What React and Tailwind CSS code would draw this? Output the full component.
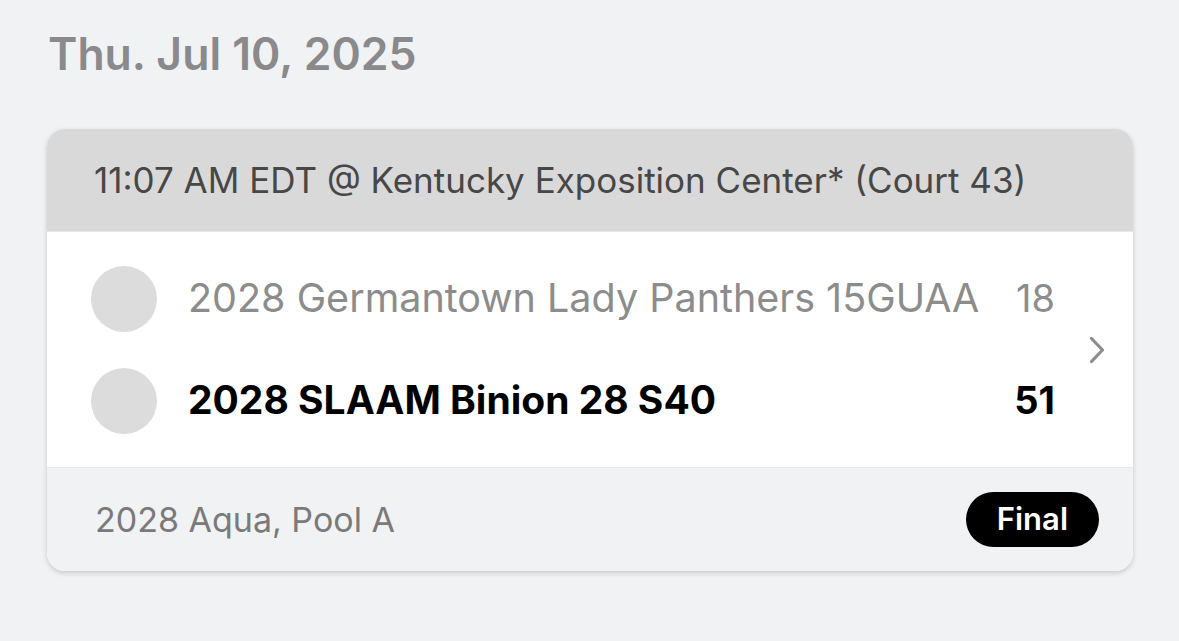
const font = { fontFamily: 'Inter, "Noto Sans", sans-serif' };

const TeamRow = ({ name, score, winner }) => (
  <div className="flex items-center h-[66px]">
    <div className="w-[66px] h-[66px] rounded-full bg-[#dcdcdc] shrink-0" />
    <div
      className={`ml-[31px] flex-1 whitespace-nowrap ${
        winner ? 'text-[39px] font-bold text-black' : 'text-[39.5px] text-[#8c8c8c]'
      }`}
    >
      {name}
    </div>
    <div
      className={`text-[38px] text-right ${winner ? 'font-bold text-black' : 'text-[#8c8c8c]'}`}
    >
      {score}
    </div>
  </div>
);

export default function App() {
  return (
    <div className="w-[1179px] h-[641px] bg-[#f1f2f4] overflow-hidden" style={font}>
      <div className="pl-[48px] pt-[26px] text-[44.5px] font-semibold text-[#8a898c] leading-[56px]">
        Thu. Jul 10, 2025
      </div>
      <div className="ml-[47px] mt-[47px] w-[1086px] rounded-[18px] overflow-hidden bg-white shadow-[0_2px_5px_rgba(0,0,0,0.18)]">
        {/* header */}
        <div className="h-[102px] bg-[#d9d9d9] flex items-center pl-[47px] text-[35px] text-[#474747]">
          11:07 AM EDT @ Kentucky Exposition Center* (Court 43)
        </div>
        {/* teams */}
        <div className="h-[236px] bg-white flex items-center pl-[44px] pr-[28px] border-t border-[#e8e8e8]">
          <div className="flex-1 flex flex-col gap-[36px]">
            <TeamRow name="2028 Germantown Lady Panthers 15GUAA" score="18" />
            <TeamRow name="2028 SLAAM Binion 28 S40" score="51" winner />
          </div>
          <svg className="ml-[34px] w-[16px] h-[28px]" viewBox="0 0 16 28" fill="none">
            <polyline points="2.5,2.5 13.5,14 2.5,25.5" stroke="#8c8c8c" strokeWidth="3.2" strokeLinecap="round" strokeLinejoin="round" />
          </svg>
        </div>
        {/* footer */}
        <div className="h-[104px] bg-[#f1f2f4] border-t border-[#e6e6e6] flex items-center justify-between pl-[48px] pr-[34px]">
          <div className="text-[34px] text-[#7a7a7a]">2028 Aqua, Pool A</div>
          <div className="h-[55px] px-[31px] rounded-full bg-black text-white text-[31px] font-semibold flex items-center">
            Final
          </div>
        </div>
      </div>
    </div>
  );
}
